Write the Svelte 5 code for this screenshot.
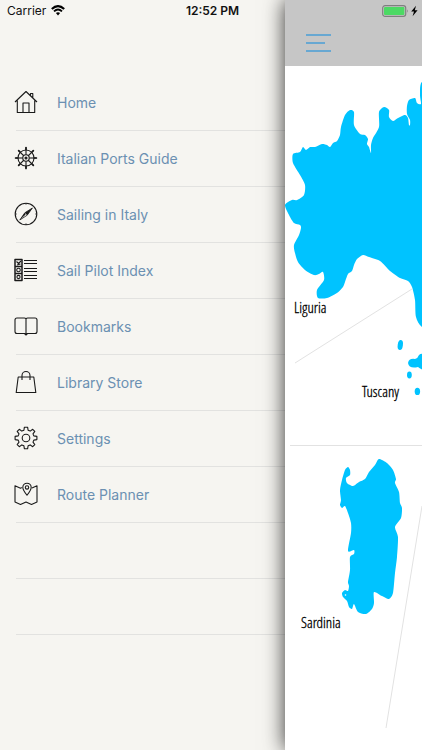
<script>
  const menu = [
    { icon: "home", label: "Home" },
    { icon: "wheel", label: "Italian Ports Guide" },
    { icon: "compass", label: "Sailing in Italy" },
    { icon: "index", label: "Sail Pilot Index" },
    { icon: "book", label: "Bookmarks" },
    { icon: "bag", label: "Library Store" },
    { icon: "gear", label: "Settings" },
    { icon: "route", label: "Route Planner" },
  ];
  const emptyRows = [1, 2];
  const spokes = [0, 45, 90, 135, 180, 225, 270, 315];

  const mainland =
    "285,205 292,200 297,200 304,195 305,185 300,175 293,163 293,154 300,152 303,147 306,150 310,147 315,147 322,144 327,145 330,147 333,143 337,141 340,135 341,127 345,115 350,110 354,112 354,125 360,134 365,135 368,139 367,144 369,147 371,153 371,145 373,138 379,127 379,112 384,107 389,110 389,117 393,121 398,118 405,115 408,118 409,125 410,125 410,120 407,114 407,106 409,100 415,98 417,103 421,104 420,95 422,82 440,82 440,335 422,327 416,317 415,300 412,287 408,281 400,278 390,271 380,261 369,257 363,255 357,259 354,265 352,271 348,274 345,282 343,287 337,293 327,298 318,298 317,290 324,280 323,272 319,274 314,275 305,270 298,262 295,253 294,245 299,235 301,228 300,225 294,223 289,215";
  const sardinia =
    "379,459 387,463 393,470 396,479 395,483 399,492 400,503 402,508 401,518 395,527 398,537 397,557 395,573 393,593 389,599 382,596 374,592 374,603 372,609 366,614 358,612 354,604 352,609 349,607 347,601 343,597 342,593 345,590 348,591 349,586 348,582 350,570 350,557 354,554 354,550 348,551 351,533 351,523 348,513 345,506 342,508 340,505 341,500 340,490 342,480 345,470 348,467 350,470 350,475 346,478 347,483 353,486 359,482 365,479 369,472 375,465";

  // closed curve running through every point
  const smooth = (list) => {
    const pts = list.split(" ").map((p) => p.split(",").map(Number));
    const at = (i) => pts[(i + pts.length) % pts.length];
    let d = `M${at(0)}`;
    for (let i = 0; i < pts.length; i++) {
      const [a, b, c, e] = [at(i - 1), at(i), at(i + 1), at(i + 2)];
      const c1 = [b[0] + (c[0] - a[0]) / 8, b[1] + (c[1] - a[1]) / 8];
      const c2 = [c[0] - (e[0] - b[0]) / 8, c[1] - (e[1] - b[1]) / 8];
      d += `C${c1} ${c2} ${c}`;
    }
    return d + "Z";
  };
</script>

<div class="app">
  <div class="status">
    <div class="carrier">
      <span>Carrier</span>
      <svg width="14" height="11" viewBox="0 0 14 11" fill="none" stroke="#000">
        <path d="M0.8 4Q7-1.8 13.2 4" stroke-width="2.1" />
        <path d="M3 6.4Q7 2.8 11 6.4" stroke-width="1.9" />
        <path d="M7 10.4L4.9 8.1Q7 6.5 9.1 8.1Z" fill="#000" stroke="none" />
      </svg>
    </div>
    <strong>12:52 PM</strong>
    <div class="power">
      <svg width="36" height="12" viewBox="0 0 36 12">
        <rect x="0.7" y="0.7" width="23" height="10.6" rx="2.4" fill="none" stroke="#7f7f7f" stroke-width="1.2" />
        <rect x="2" y="2" width="20.4" height="8" rx="1" fill="#4cd964" />
        <path d="M25 4.2q1.5 1.8 0 3.6z" fill="#7f7f7f" />
        <path d="M34 0.8L29.2 6.6H32L30.6 11.2L35.6 5.2H32.8Z" fill="#000" />
      </svg>
    </div>
  </div>

  <nav class="drawer">
    <ul>
      {#each menu as item}
        <li>
          <a href="#{item.icon}">
            <svg class="icon" viewBox="0 0 24 24">
              {#if item.icon === "home"}
                <path d="M1 12L12 1.5L23 12M3.3 10.5V22.5H20.7V10.5M9 22.5V13H15V22.5M16.5 5.5V3.5H18.8V7.8" />
              {:else if item.icon === "wheel"}
                <circle cx="12" cy="12" r="8" />
                <circle cx="12" cy="12" r="3.2" />
                <circle cx="12" cy="12" r="1" fill="#1a1a1a" />
                {#each spokes as angle}
                  <g transform="rotate({angle} 12 12)">
                    <path d="M12 8.8V1.5" />
                    <path d="M12 3.5V1.6" stroke-width="1.7" stroke-linecap="round" />
                  </g>
                {/each}
              {:else if item.icon === "compass"}
                <circle cx="12" cy="12" r="10.8" />
                <path d="M12 1.2V2.6M12 21.4V22.8M1.2 12H2.6M21.4 12H22.8" />
                <path d="M18.4 6L13.2 13.2L5.8 18L10.8 10.8Z" stroke-width="0.8" />
                <path d="M18.4 6L10.8 10.8L12.2 12.2L13.2 13.2ZM5.8 18L10.8 10.8L11.6 12.4Z" fill="#1a1a1a" stroke="none" />
              {:else if item.icon === "index"}
                <path d="M1 1.5H8V22.5H1ZM1 8.5H8M1 15.5H8" stroke-width="1.5" />
                <path d="M2.5 3.5L4.5 5.5L7 3M3 7L6.5 6" />
                <circle cx="4.5" cy="12" r="1.8" />
                <circle cx="4.5" cy="19" r="1.6" />
                <path d="M10 2.5H23M10 5.5H23M10 10.5H23M10 13.5H23M10 17.5H23M10 20.5H23" />
              {:else if item.icon === "book"}
                <path d="M12 5Q12 4 10.5 4H3Q1 4 1 6V17.5Q1 19.5 3 19.5H10.5L12 21L13.5 19.5H21Q23 19.5 23 17.5V6Q23 4 21 4H13.5Q12 4 12 5V20.5" />
              {:else if item.icon === "bag"}
                <path d="M4.2 7H19.8L21.8 22.5H2.2ZM8 10V5.5A4 4 0 0 1 16 5.5V10" />
              {:else if item.icon === "gear"}
                <circle cx="12" cy="12" r="3.8" />
                <path d="M10.4 1.2H13.6L14.1 4.2L16.2 5.1L18.7 3.3L20.8 5.4L19 7.9L19.8 9.9L22.9 10.4V13.6L19.8 14.1L19 16.1L20.8 18.6L18.7 20.7L16.2 18.9L14.1 19.8L13.6 22.8H10.4L9.9 19.8L7.8 18.9L5.3 20.7L3.2 18.6L5 16.1L4.2 14.1L1.1 13.6V10.4L4.2 9.9L5 7.9L3.2 5.4L5.3 3.3L7.8 5.1L9.9 4.2Z" />
              {:else if item.icon === "route"}
                <path d="M7.8 5.6L6.5 6.2L1 3.8V20L6.5 22.4L12 20L17.5 22.4L23 20V3.8L18 6" />
                <path d="M13 13.2C10.5 10 8.8 7.6 8.8 5.4A4.2 4.2 0 0 1 17.2 5.4C17.2 7.6 15.5 10 13 13.2Z" />
                <circle cx="13" cy="5.4" r="1.7" />
              {/if}
            </svg>
            {item.label}
          </a>
        </li>
      {/each}
      {#each emptyRows as row}
        <li></li>
      {/each}
    </ul>
  </nav>

  <main>
    <header>
      <button aria-label="Menu">
        <span></span>
        <span class="short"></span>
        <span></span>
      </button>
    </header>
    <svg class="map" viewBox="285 66 137 684" preserveAspectRatio="xMinYMin slice">
      <g fill="#00c3ff">
        <path d={smooth(mainland)} />
        <path d={smooth(sardinia)} />
        <ellipse cx="400.3" cy="345" rx="2.6" ry="5" transform="rotate(8 400 345)" />
        <path d="M408 363Q409 358 415 359Q418 358 419 355Q421 353 424 354V370Q420 369 418 367Q409 369 408 363Z" />
        <ellipse cx="409.4" cy="375" rx="2.4" ry="3.4" />
        <ellipse cx="417.4" cy="391.4" rx="2.7" ry="3.7" />
      </g>
      <circle cx="345.5" cy="595" r="0.8" fill="#fff" />
      <path class="divider" d="M295 363L412 289M290 445.5H422M422 506L386 728" />
      <text x="294" y="313">Liguria</text>
      <text x="362" y="397">Tuscany</text>
      <text x="301" y="628">Sardinia</text>
    </svg>
  </main>
</div>

<style>
  :global(body) {
    margin: 0;
    background: #f6f5f1;
  }

  .app {
    position: relative;
    display: flex;
    min-height: 100vh;
    overflow: hidden;
    font-family: Inter, "Liberation Sans", sans-serif;
  }

  .status {
    position: absolute;
    top: 0;
    left: 0;
    right: 0;
    z-index: 2;
    display: grid;
    grid-template-columns: 1fr auto 1fr;
    align-items: center;
    height: 21px;
    padding: 0 4px 0 7px;
    font-size: 12px;
    color: #111;
  }

  .status strong {
    font-weight: 600;
  }

  .carrier {
    display: flex;
    align-items: center;
    gap: 5px;
  }

  .power {
    display: flex;
    justify-content: flex-end;
  }

  .drawer {
    flex: 0 0 285px;
    background: #f6f5f1;
  }

  ul {
    list-style: none;
    margin: 0;
    padding: 75px 0 0 16px;
  }

  li {
    box-sizing: border-box;
    height: 56px;
    border-bottom: 1px solid #e2e2e0;
  }

  li a {
    display: flex;
    align-items: center;
    gap: 19px;
    height: 54px;
    margin-left: -2px;
    color: #6b90b2;
    font-size: 14px;
    text-decoration: none;
  }

  .icon {
    width: 24px;
    height: 24px;
    fill: none;
    stroke: #1a1a1a;
    stroke-width: 1.1;
    stroke-linejoin: round;
  }

  main {
    position: relative;
    z-index: 1;
    flex: 1;
    min-width: 0;
    background: #fff;
    box-shadow: 0 0 20px rgba(0, 0, 0, 0.8);
  }

  header {
    display: flex;
    align-items: flex-end;
    box-sizing: border-box;
    height: 66px;
    padding: 0 21px 14px;
    background: #c6c6c6;
  }

  button {
    display: flex;
    flex-direction: column;
    gap: 6px;
    width: 25px;
    padding: 0;
    border: 0;
    background: none;
  }

  button span {
    width: 100%;
    height: 2px;
    background: #68a8d2;
  }

  button .short {
    width: 76%;
  }

  .map {
    display: block;
    width: 100%;
  }

  .map text {
    font-family: "Open Sans Condensed Light", "Open Sans Condensed", "Open Sans", sans-serif;
    font-size: 15px;
    font-weight: 300;
    fill: #000;
    stroke: #000;
    stroke-width: 0.3px;
  }

  .divider {
    fill: none;
    stroke: #e2e2e2;
  }
</style>
